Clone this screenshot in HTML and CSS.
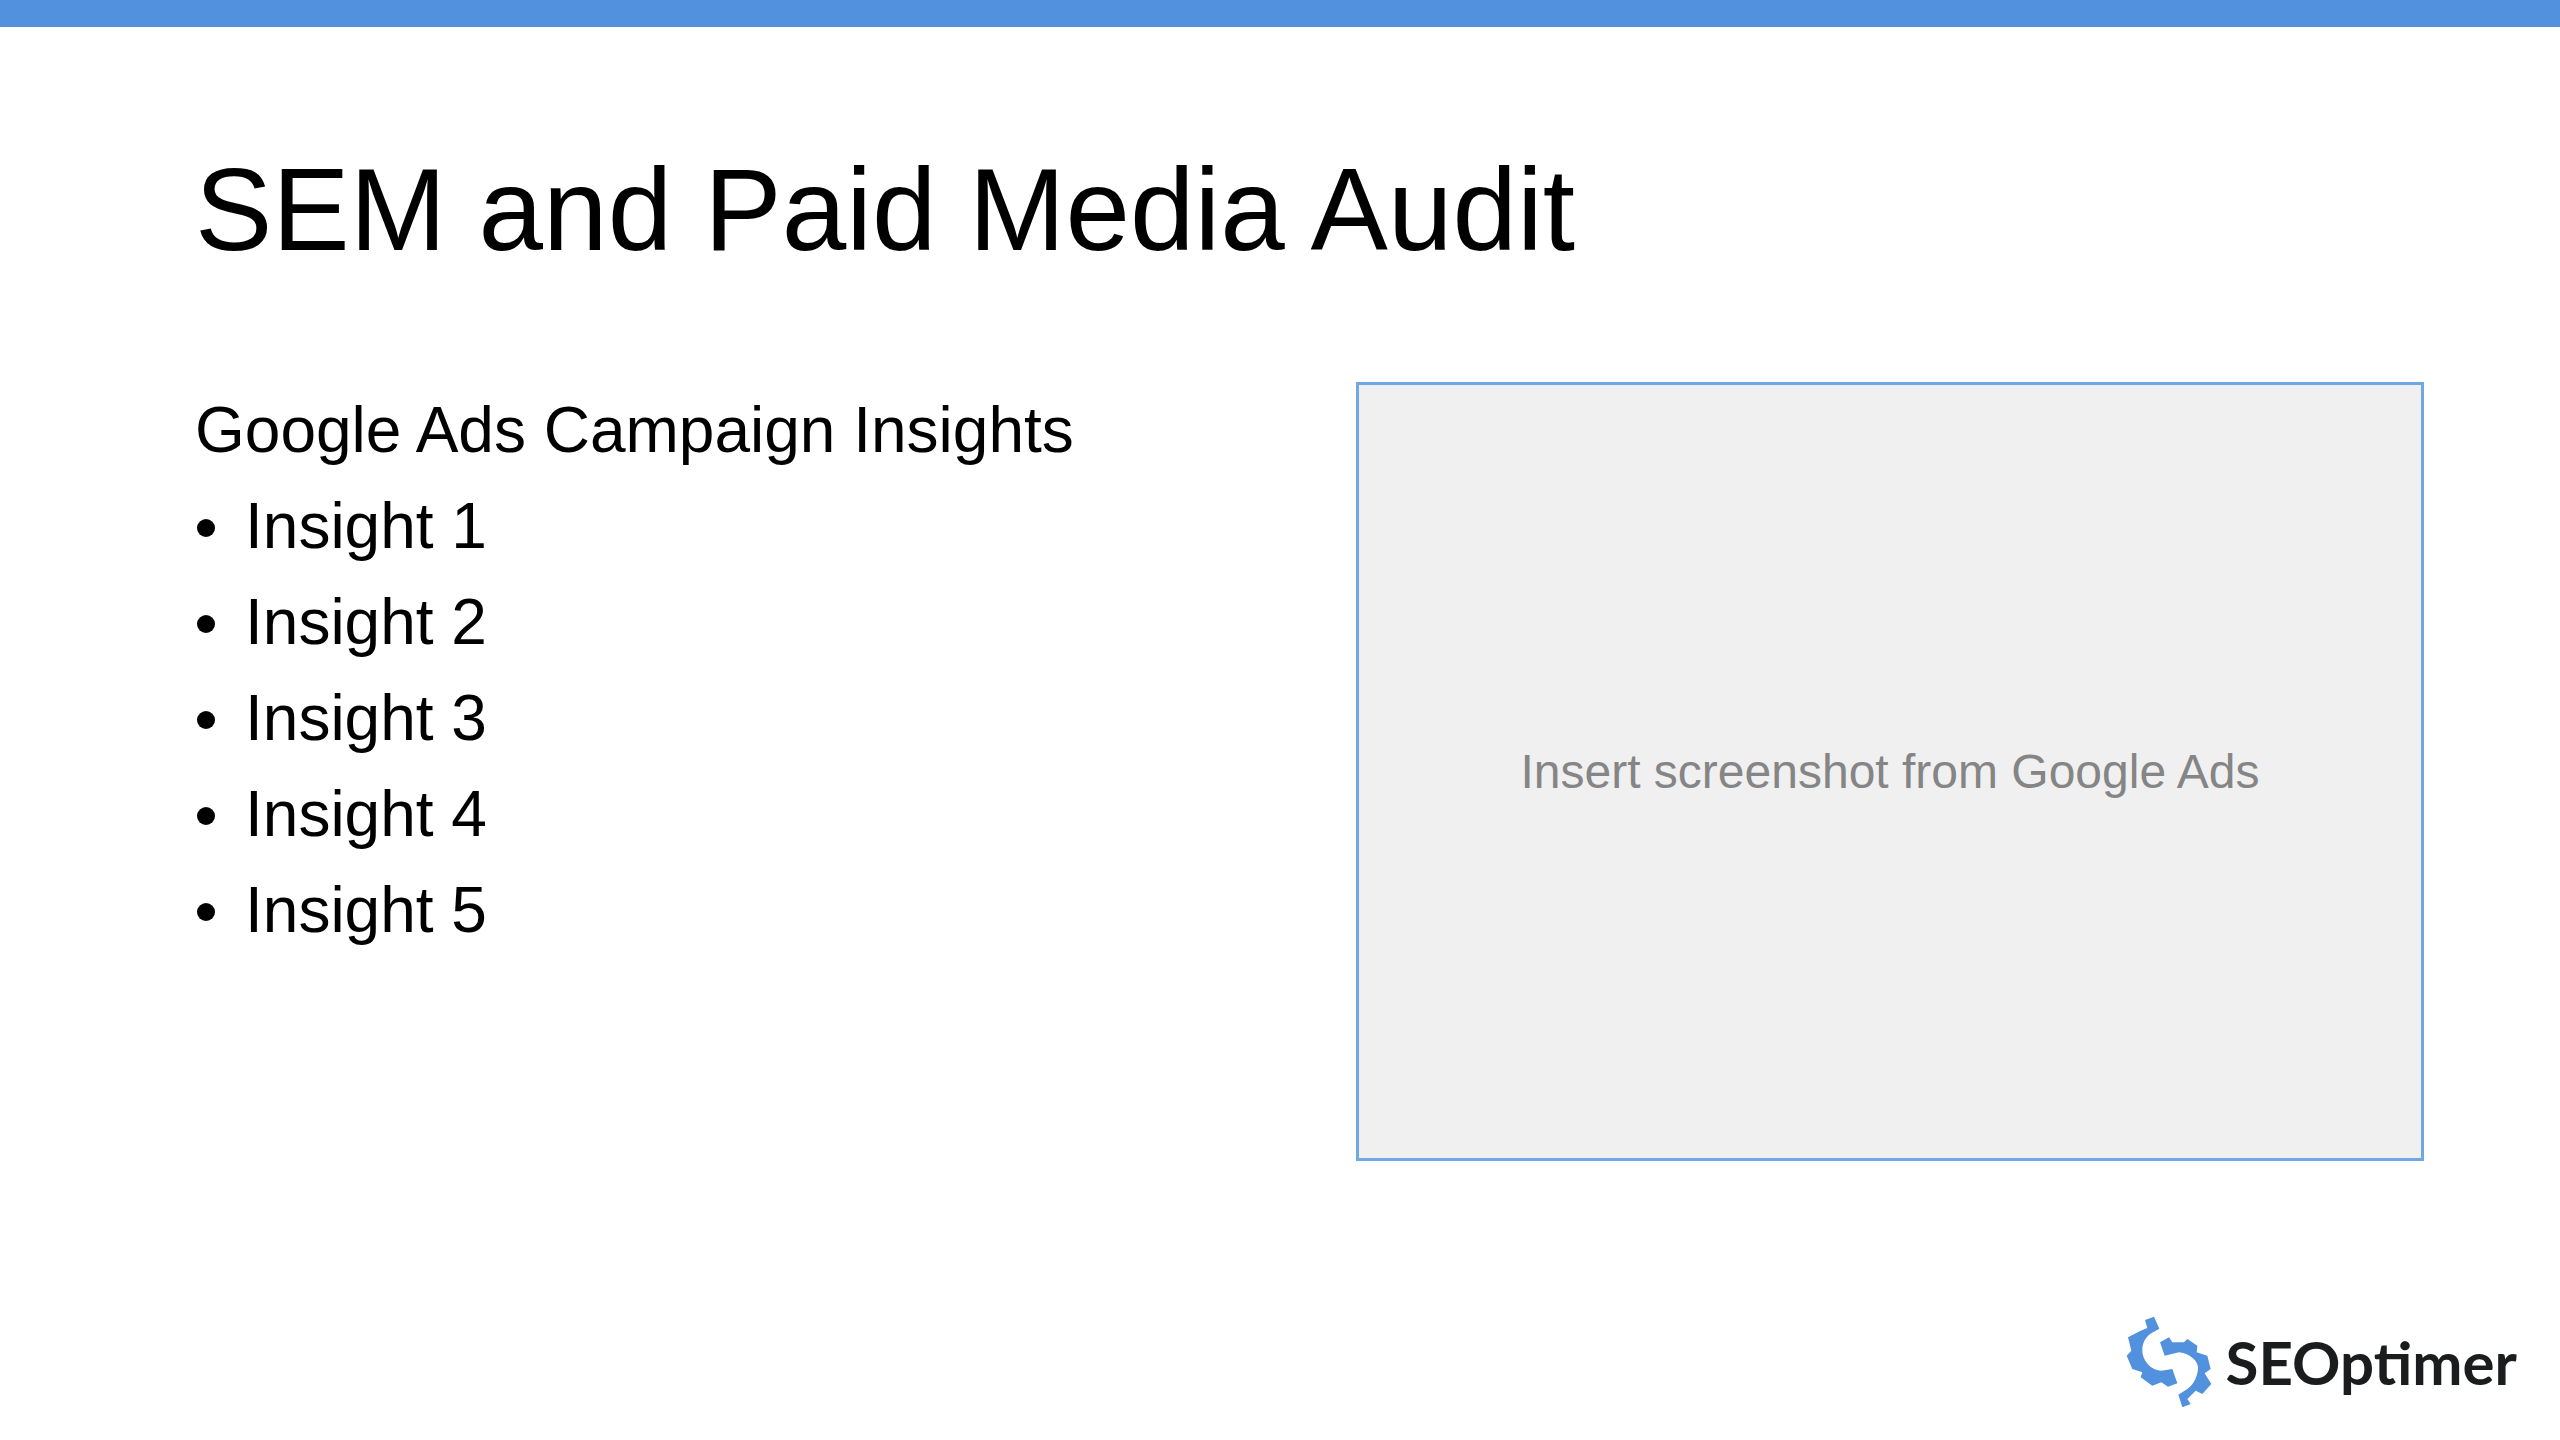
FILE: index.html
```html
<!DOCTYPE html>
<html lang="en">
<head>
<meta charset="utf-8">
<title>SEM and Paid Media Audit</title>
<link rel="stylesheet" href="styles.css">
</head>
<body>
<div class="slide">
  <div class="topbar"></div>
  <h1 class="title">SEM and Paid Media Audit</h1>
  <div class="content">
    <div class="insights">
      <p class="lead">Google Ads Campaign Insights</p>
      <ul class="list">
        <li>Insight 1</li>
        <li>Insight 2</li>
        <li>Insight 3</li>
        <li>Insight 4</li>
        <li>Insight 5</li>
      </ul>
    </div>
    <div class="placeholder">Insert screenshot from Google Ads</div>
  </div>
  <div class="logo">
    <svg class="logo-mark" viewBox="100 80 270 285" aria-hidden="true">
      <path class="gear" d="M163 98L190 88L206 124L178 140C160 155 152 175 156 200C162 228 185 250 212 250L245 245L260 288L232 298L212 285L185 295L150 270L155 255L125 245L108 205L122 190L112 150L150 130L170 122Z"/>
      <path class="gear" d="M208 165L235 150L245 165L280 165L290 155L320 175L318 195L350 205L360 245L342 258L362 290L335 320L315 310L290 335L300 350L275 360L263 322L290 305C310 292 322 265 322 240C320 220 300 200 265 195L222 205Z"/>
    </svg>
    <span class="logo-text">SEOptimer</span>
  </div>
</div>
</body>
</html>
```
FILE: styles.css
```css
* { box-sizing: border-box; }
html, body { margin: 0; padding: 0; background: #fff; }
.slide {
  width: 2560px;
  height: 1440px;
  display: flex;
  flex-direction: column;
  font-family: "Liberation Sans", Arial, sans-serif;
  color: #000;
  overflow: hidden;
}
.topbar { height: 27px; background: #5291dd; flex: none; }
.title {
  margin: 113px 0 0 195px;
  font-size: 116px;
  font-weight: 400;
  line-height: 140px;
}
.content {
  margin: 102px 136px 0 195px;
  display: flex;
  justify-content: space-between;
  align-items: flex-start;
}
.insights { font-size: 64px; line-height: 96px; padding-top: 0; }
.lead { margin: 0; }
.list { margin: 0; padding: 0; list-style: none; }
.list li { position: relative; padding-left: 50px; }
.list li::before {
  content: "";
  position: absolute;
  left: 2px;
  top: 41px;
  width: 18px;
  height: 18px;
  border-radius: 50%;
  background: #000;
}
.placeholder {
  width: 1068px;
  height: 779px;
  border: 3px solid #6fa8e4;
  background: #f0f0f0;
  color: #858585;
  font-size: 48px;
  display: flex;
  align-items: center;
  justify-content: center;
}
.logo {
  margin: 153px 43px 0 auto;
  display: flex;
  align-items: center;
  gap: 12px;
}
.logo-mark { width: 90px; height: 95px; fill: #5291dd; }
.logo-text {
  font-family: Lato, sans-serif;
  font-weight: 700;
  font-size: 60px;
  color: #1a1c1e;
}
```
